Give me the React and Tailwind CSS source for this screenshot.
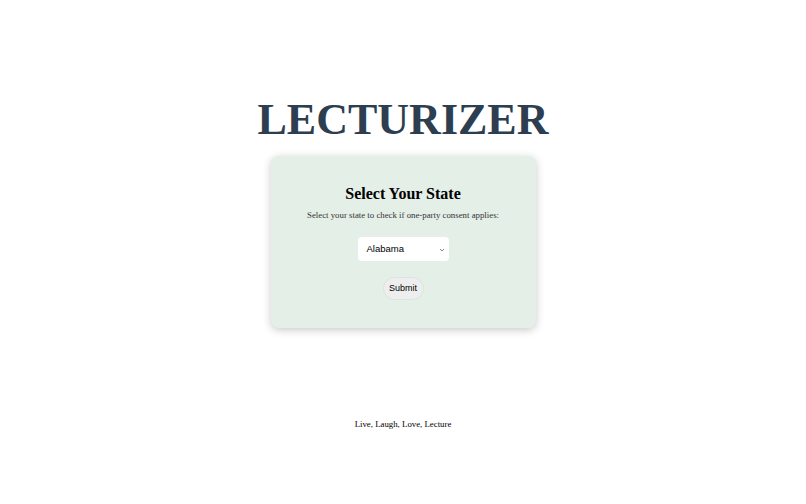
import React from "react";

export default function App() {
  return (
    <div className="w-full min-h-[504px] bg-white flex flex-col items-center pt-[98px]" style={{ fontFamily: '"Liberation Serif", "Times New Roman", serif' }}>
      <h1 className="text-[44px] leading-[44px] font-bold text-[#2c3e50]">LECTURIZER</h1>
      <div className="mt-[14px] w-[265px] h-[172px] bg-[#e4efe8] rounded-[8px] shadow-[0_2px_8px_rgba(0,0,0,0.22)] flex flex-col items-center pt-[29px]">
        <h2 className="text-[16px] leading-[18px] font-bold text-black">Select Your State</h2>
        <p className="mt-[6px] text-[8.8px] leading-[12px] text-[#333]">Select your state to check if one-party consent applies:</p>
        <div className="mt-[16px] w-[91px] h-[24px] bg-white rounded-[4px] flex items-center justify-between pl-[9px] pr-[4px]" style={{ fontFamily: '"Liberation Sans", Arial, sans-serif' }}>
          <span className="text-[9.5px] text-black">Alabama</span>
          <svg width="6" height="4" viewBox="0 0 6 4" className="mt-[1px]"><path d="M1 1 L3 3 L5 1" fill="none" stroke="#666" strokeWidth="0.8" /></svg>
        </div>
        <div className="mt-[16px] w-[41px] h-[23px] rounded-full bg-[#eeeeee] border border-[#dde3df] flex items-center justify-center text-[9px] text-black" style={{ fontFamily: '"Liberation Sans", Arial, sans-serif' }}>Submit</div>
      </div>
      <p className="mt-[90px] text-[8.8px] leading-[12px] text-black">Live, Laugh, Love, Lecture</p>
    </div>
  );
}
